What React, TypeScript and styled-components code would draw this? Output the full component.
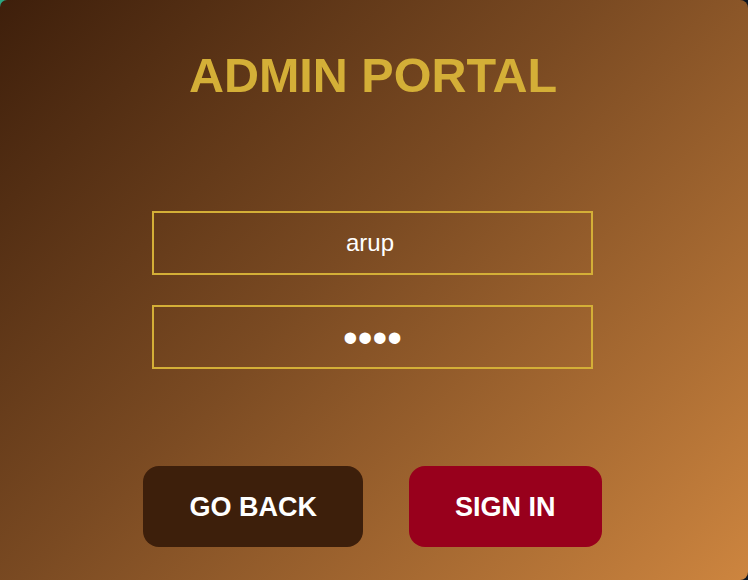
import React from "react";
import styled, { createGlobalStyle } from "styled-components";

const GlobalStyle = createGlobalStyle`
  html, body {
    margin: 0;
    padding: 0;
    height: 100%;
    overflow: hidden;
  }
  body {
    background: linear-gradient(90deg, #2aa883 0%, #14323a 50%, #0d1520 100%);
    font-family: "Liberation Sans", Arial, sans-serif;
  }
`;

const AdminLogin: React.FC = () => {
  return (
    <>
      <GlobalStyle />
      <Card>
        <Title>ADMIN PORTAL</Title>
        <Form onSubmit={(e) => e.preventDefault()}>
          <Field type="text" defaultValue="arup" />
          <Field type="password" defaultValue="1234" />
          <ButtonRow>
            <ActionButton type="button" $variant="back">
              GO BACK
            </ActionButton>
            <ActionButton type="submit" $variant="primary">
              SIGN IN
            </ActionButton>
          </ButtonRow>
        </Form>
      </Card>
    </>
  );
};

const Card = styled.div`
  box-sizing: border-box;
  width: 100vw;
  height: 100vh;
  display: flex;
  flex-direction: column;
  align-items: center;
  padding-top: 48px;
  border-radius: 7px 8px 8px 0;
  background: linear-gradient(135deg, #3e1f0b 0%, #7a4a22 45%, #cd853f 100%);
`;

const Title = styled.h1`
  margin: 0 0 0 -2px;
  font-size: 48.5px;
  font-weight: 700;
  line-height: 55px;
  color: #d4af37;
`;

const Form = styled.form`
  margin-top: 108px;
  margin-right: 3px;
  display: flex;
  flex-direction: column;
  align-items: center;
  gap: 30px;
`;

const Field = styled.input`
  box-sizing: border-box;
  width: 441px;
  height: 64px;
  padding: 0 5px 0 0;
  border: 2px solid #d4af37;
  background: transparent;
  color: #ffffff;
  font-family: "Liberation Sans", Arial, sans-serif;
  font-size: 24px;
  text-align: center;
  outline: none;

  &[type="password"] {
    font-size: 42px;
    padding: 2px 0 0 0;
  }
`;

const ButtonRow = styled.div`
  margin-top: 67px;
  display: flex;
  gap: 46px;
`;

const ActionButton = styled.button<{ $variant: "back" | "primary" }>`
  height: 81px;
  padding: 2px 46px 0;
  border: none;
  border-radius: 16px;
  font-family: "Liberation Sans", Arial, sans-serif;
  font-size: 27px;
  font-weight: 700;
  color: #ffffff;
  cursor: pointer;
  background: ${(p) => (p.$variant === "back" ? "#3d1f0b" : "#98001c")};
`;

export default AdminLogin;
